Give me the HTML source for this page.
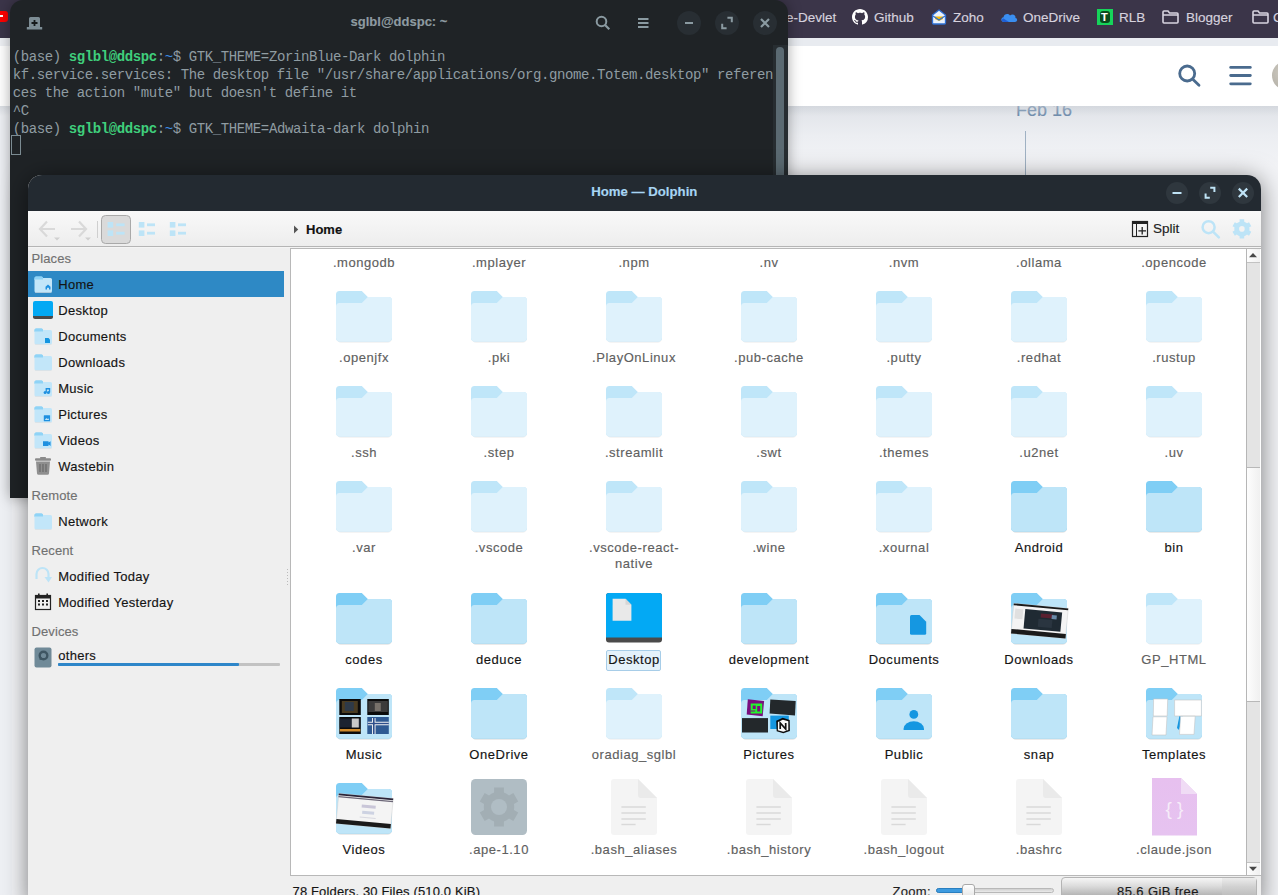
<!DOCTYPE html>
<html><head><meta charset="utf-8"><style>
*{margin:0;padding:0;box-sizing:border-box}
html,body{width:1278px;height:895px;overflow:hidden}
body{position:relative;background:#f0f1f4;font-family:"Liberation Sans",sans-serif}
.a{position:absolute}
.mono{font-family:"Liberation Mono",monospace}
/* terminal */
#term{left:10px;top:0;width:778px;height:498px;background:#1f2326;border-radius:13px 13px 0 0;box-shadow:0 0 14px rgba(0,0,0,.35)}
.tl{position:absolute;left:2.8px;white-space:pre;font-size:14px;letter-spacing:-0.4px;color:#8f9ca2;line-height:18px;height:18px}
.g{color:#3fcf7c;font-weight:bold}
.bl{color:#3d8fe8}
/* dolphin */
#dol{left:28px;top:174px;width:1233px;height:740px;background:#efefef;border-radius:14px 14px 0 0;box-shadow:0 0 16px rgba(0,0,0,.35);overflow:hidden}
#title{left:0;top:0;width:1233px;height:37px;background:#232a31}
#tool{left:0;top:37px;width:1233px;height:36px;background:linear-gradient(#f9f9f9,#ececec);border-bottom:1px solid #b4b4b4}
.side{font-size:13px;color:#1b1b1b}
.hdr{font-size:13px;color:#777}
.lbl{position:absolute;width:130px;text-align:center;font-size:13px;line-height:16px;color:#1f1f1f;letter-spacing:.4px}
.hid{color:#666}

span{-webkit-text-stroke:0.15px currentColor}
.mono span,.tl{-webkit-text-stroke:0}
</style></head><body>
<!-- browser background -->
<div class="a" style="left:0;top:0;width:1278px;height:38px;background:#3b3549"></div>
<div class="a" style="left:0;top:11px;width:8px;height:11px;background:#f00;border-radius:0 3px 3px 0"></div>
<div class="a" style="left:0;top:15px;width:3px;height:2px;background:#fff"></div>
<div class="a" style="left:0;top:38px;width:1278px;height:8px;background:#e8ebf0"></div>
<div class="a" style="left:0;top:106px;width:1278px;height:789px;background:linear-gradient(#e0e3e8,#eceef2 30px,#f2f3f6 60px)"></div>
<div class="a" style="left:0;top:38px;width:12px;height:857px;background:#eef0f4"></div>
<div id="bm" style="position:absolute;left:0;top:0;width:1278px;white-space:nowrap;font-size:13.5px;color:#d6d2de;line-height:16px">
 <span class="a" style="left:786px;top:10px">e-Devlet</span>
 <svg class="a" style="left:852px;top:9px" width="16" height="16" viewBox="0 0 16 16"><path fill="#fff" d="M8 0C3.58 0 0 3.58 0 8c0 3.54 2.29 6.53 5.47 7.59.4.07.55-.17.55-.38 0-.19-.01-.82-.01-1.49-2.01.37-2.53-.49-2.69-.94-.09-.23-.48-.94-.82-1.13-.28-.15-.68-.52-.01-.53.63-.01 1.08.58 1.23.82.72 1.21 1.87.87 2.33.66.07-.52.28-.87.51-1.07-1.78-.2-3.64-.89-3.64-3.95 0-.87.31-1.59.82-2.15-.08-.2-.36-1.02.08-2.12 0 0 .67-.21 2.2.82.64-.18 1.32-.27 2-.27.68 0 1.36.09 2 .27 1.53-1.04 2.2-.82 2.2-.82.44 1.1.16 1.92.08 2.12.51.56.82 1.27.82 2.15 0 3.07-1.87 3.75-3.65 3.95.29.25.54.73.54 1.48 0 1.07-.01 1.93-.01 2.2 0 .21.15.46.55.38A8.013 8.013 0 0016 8c0-4.42-3.58-8-8-8z"/></svg>
 <span class="a" style="left:874px;top:10px">Github</span>
 <svg class="a" style="left:931px;top:9px" width="16" height="16" viewBox="0 0 16 16"><path d="M8 1 L14.5 6 V14 a1 1 0 0 1 -1 1 H2.5 a1 1 0 0 1 -1 -1 V6 Z" fill="#e9f1fb" stroke="#2d6fd2" stroke-width="1.3"/><path d="M4 7.5 H12 V10 L8 12 L4 10Z" fill="#f5b800"/><path d="M2 7 L8 11 L14 7" fill="none" stroke="#2d6fd2" stroke-width="1.2"/></svg>
 <span class="a" style="left:953px;top:10px">Zoho</span>
 <svg class="a" style="left:1000px;top:9px" width="18" height="16" viewBox="0 0 18 16"><path d="M4 13 C0.5 13 0.5 8.5 3.5 8.2 C4 5 8 4 10 6.5 C12.5 4.5 16 6 15.5 9 C18 9.5 17.5 13 15 13 Z" fill="#3a8ef0"/><path d="M4 13 C1.5 13 1 10 3.5 9.5 L9 13Z" fill="#1f5fd6"/></svg>
 <span class="a" style="left:1023px;top:10px">OneDrive</span>
 <div class="a" style="left:1097px;top:9px;width:16px;height:16px;background:#16d45a"></div>
 <div class="a" style="left:1100px;top:11px;width:10px;height:12px;border-radius:3px;background:#0a4a1e"></div>
 <span class="a" style="left:1101px;top:9px;font-weight:bold;color:#fff;font-size:11px">T</span>
 <span class="a" style="left:1119px;top:10px">RLB</span>
 <svg class="a" style="left:1162px;top:10px" width="17" height="14" viewBox="0 0 17 14"><path d="M1 2 a1 1 0 0 1 1 -1 H6 L7.5 3 H15 a1 1 0 0 1 1 1 V12 a1 1 0 0 1 -1 1 H2 a1 1 0 0 1 -1 -1Z M1 5 H16" fill="none" stroke="#d8d4e0" stroke-width="1.6"/></svg>
 <span class="a" style="left:1186px;top:10px">Blogger</span>
 <svg class="a" style="left:1252px;top:10px" width="17" height="14" viewBox="0 0 17 14"><path d="M1 2 a1 1 0 0 1 1 -1 H6 L7.5 3 H15 a1 1 0 0 1 1 1 V12 a1 1 0 0 1 -1 1 H2 a1 1 0 0 1 -1 -1Z M1 5 H16" fill="none" stroke="#d8d4e0" stroke-width="1.6"/></svg>
 <span class="a" style="left:1273px;top:10px">C</span>
</div>
<span class="a" style="left:1016px;top:100px;font-size:18px;line-height:20px;color:#6e8bab">Feb 16</span>
<div class="a" style="left:0;top:46px;width:1278px;height:60px;background:#fff"></div>
<svg class="a" style="left:1170px;top:58px" width="100" height="40" viewBox="1170 58 100 40">
 <circle cx="1187.2" cy="73.5" r="7.5" fill="none" stroke="#4a6b8e" stroke-width="2.8"/>
 <line x1="1192.8" y1="79.2" x2="1199" y2="85.3" stroke="#4a6b8e" stroke-width="2.8" stroke-linecap="round"/>
 <line x1="1230.7" y1="67.4" x2="1250.3" y2="67.4" stroke="#4a6b8e" stroke-width="2.8" stroke-linecap="round"/>
 <line x1="1230.7" y1="75.5" x2="1250.3" y2="75.5" stroke="#4a6b8e" stroke-width="2.8" stroke-linecap="round"/>
 <line x1="1230.7" y1="83.8" x2="1250.3" y2="83.8" stroke="#4a6b8e" stroke-width="2.8" stroke-linecap="round"/>
</svg>
<div class="a" style="left:1272px;top:61px;width:29px;height:29px;border-radius:50%;background:radial-gradient(circle at 40% 40%,#cfcbc2,#a9a69d)"></div>
<div class="a" style="left:0;top:106px;width:1278px;height:10px;background:linear-gradient(rgba(200,205,212,.5),rgba(230,233,238,0))"></div>
<div class="a" style="left:1025px;top:131px;width:1px;height:50px;background:#9fb1c3"></div>


<!-- terminal -->
<div class="a" id="term">
 <svg class="a" style="left:16px;top:17px" width="17" height="13" viewBox="0 0 17 13"><path d="M3 1.5 a1.5 1.5 0 0 1 1.5 -1.5 H12.5 a1.5 1.5 0 0 1 1.5 1.5 V10 H16.2 V12.5 H0.8 V10 H3Z" fill="#7d8d95"/><path d="M8.5 3 V9 M5.5 6 H11.5" stroke="#15191b" stroke-width="1.8"/></svg>
 <span class="a" style="left:0;width:778px;text-align:center;top:14px;font-size:13px;line-height:16px;font-weight:bold;color:#8e9ba1">sglbl@ddspc: ~</span>
 <svg class="a" style="left:584px;top:14px" width="180" height="20" viewBox="594 14 180 20">
  <circle cx="601.5" cy="21.5" r="4.8" fill="none" stroke="#8a9aa1" stroke-width="2"/>
  <line x1="605" y1="25" x2="609.3" y2="29.3" stroke="#8a9aa1" stroke-width="2.2"/>
  <path d="M638 19 H648.5 M638 23 H648.5 M638 27 H648.5" stroke="#8a9aa1" stroke-width="1.8"/>
 </svg>
 <div class="a" style="left:667px;top:11px;width:24px;height:24px;border-radius:50%;background:#282e33"></div>
 <div class="a" style="left:705px;top:11px;width:24px;height:24px;border-radius:50%;background:#282e33"></div>
 <div class="a" style="left:743px;top:11px;width:24px;height:24px;border-radius:50%;background:#282e33"></div>
 <svg class="a" style="left:667px;top:11px" width="100" height="24" viewBox="677 11 100 24">
  <path d="M685 23 H693" stroke="#8a9aa1" stroke-width="2"/>
  <path d="M722.2 23.8 V28.2 H726.6 M727.4 17.8 H731.8 V22.2" stroke="#8a9aa1" stroke-width="2" fill="none"/>
  <path d="M761 19 L769 27 M769 19 L761 27" stroke="#8a9aa1" stroke-width="2.2"/>
 </svg>
 <div class="mono">
  <div class="tl" style="top:48px">(base) <span class="g">sglbl@ddspc</span>:<span class="bl">~</span>$ GTK_THEME=ZorinBlue-Dark dolphin</div>
  <div class="tl" style="top:66px">kf.service.services: The desktop file "/usr/share/applications/org.gnome.Totem.desktop" referen</div>
  <div class="tl" style="top:84px">ces the action "mute" but doesn't define it</div>
  <div class="tl" style="top:102px">^C</div>
  <div class="tl" style="top:120px">(base) <span class="g">sglbl@ddspc</span>:<span class="bl">~</span>$ GTK_THEME=Adwaita-dark dolphin</div>
 </div>
 <div class="a" style="left:1px;top:135px;width:10px;height:20px;border:1px solid #7b8b92"></div>
 <div class="a" style="left:763px;top:45px;width:15px;height:453px;background:#272d31"></div>
 <div class="a" style="left:766px;top:47px;width:8px;height:451px;border-radius:4px 4px 0 0;background:#5b6a72"></div>
</div>


<div class="a" style="left:28px;top:175px;width:1232.5px;height:730px;background:#efefef;border-radius:14px 14px 0 0;box-shadow:0 3px 24px rgba(0,0,0,.5)"></div>
<div class="a" style="left:28px;top:175px;width:1232.5px;height:36px;background:#232a31;border-radius:14px 14px 0 0"></div>
<span class="a" style="left:28px;top:184px;width:1232.5px;text-align:center;font-size:13.2px;line-height:16px;font-weight:bold;color:#a7d5f3">Home — Dolphin</span>
<div class="a" style="left:1165.8px;top:182px;width:22px;height:22px;border-radius:50%;background:#2f373e"></div>
<div class="a" style="left:1199.0px;top:182px;width:22px;height:22px;border-radius:50%;background:#2f373e"></div>
<div class="a" style="left:1232.0px;top:182px;width:22px;height:22px;border-radius:50%;background:#2f373e"></div>
<svg class="a" style="left:1160px;top:180px" width="100" height="26" viewBox="1160 180 100 26">
 <path d="M1172.5 193 H1181.5" stroke="#bfe3f6" stroke-width="2"/>
 <path d="M1205.6 193.5 V197.8 H1209.8 M1214.4 192 V187.8 H1210.2" stroke="#bfe3f6" stroke-width="2" fill="none"/>
 <path d="M1238.8 188.6 L1247.2 197 M1247.2 188.6 L1238.8 197" stroke="#bfe3f6" stroke-width="2.2"/>
</svg>
<div class="a" style="left:28px;top:211px;width:1232.5px;height:36px;background:linear-gradient(#f9f9f9,#ededed);border-bottom:1px solid #b5b5b5"></div>
<div class="a" style="left:28px;top:247px;width:1232.5px;height:1px;background:#f4f4f4"></div>
<svg class="a" style="left:28px;top:211px" width="170" height="36" viewBox="28 211 170 36">
 <path d="M40 229 H55 M47 221.5 L40 229 L47 236.5" stroke="#d9d9d9" stroke-width="2.2" fill="none"/>
 <path d="M54 237.5 H60 L57 240.5Z" fill="#d0d0d0"/>
 <path d="M71 229 H86 M79 221.5 L86 229 L79 236.5" stroke="#d9d9d9" stroke-width="2.2" fill="none"/>
 <path d="M85 237.5 H91 L88 240.5Z" fill="#d0d0d0"/>
 <path d="M97.5 221 V238" stroke="#cfcfcf" stroke-width="1"/>
 <rect x="101.5" y="215.5" width="29" height="28" rx="4" fill="#dadada" stroke="#a9a9a9"/>
 <g fill="#bde4f7">
  <rect x="107.6" y="222" width="5.6" height="5.6"/><rect x="107.6" y="230.4" width="5.6" height="5.6"/>
  <rect x="116.2" y="223.4" width="8.4" height="2.8"/><rect x="116.2" y="231.8" width="8.4" height="2.8"/>
  <rect x="138.8" y="222" width="5.6" height="5.6"/><rect x="138.8" y="230.4" width="5.6" height="5.6"/>
  <rect x="147" y="223.4" width="8" height="2.8"/><rect x="147" y="231.8" width="8" height="2.8"/>
  <rect x="169.8" y="222" width="5.6" height="5.6"/><rect x="169.8" y="230.4" width="5.6" height="5.6"/>
  <rect x="178" y="223.4" width="8" height="2.8"/><rect x="178" y="231.8" width="8" height="2.8"/>
 </g>
</svg>
<svg class="a" style="left:293px;top:225px" width="6" height="9" viewBox="0 0 6 9"><path d="M1 0.5 L5.2 4.5 L1 8.5Z" fill="#555"/></svg>
<span class="a" style="left:306px;top:222px;font-size:13px;line-height:16px;font-weight:bold;color:#111">Home</span>
<svg class="a" style="left:1130px;top:219px" width="130" height="22" viewBox="1130 219 130 22">
 <rect x="1132.5" y="221.5" width="15" height="15" fill="none" stroke="#222" stroke-width="1.2"/>
 <rect x="1132" y="221" width="16" height="3" fill="#222"/>
 <path d="M1136.5 224 V237" stroke="#222" stroke-width="1"/>
 <path d="M1142.2 227 V234.6 M1138.4 230.8 H1146" stroke="#222" stroke-width="1.3"/>
 <circle cx="1208.6" cy="227.2" r="6" fill="none" stroke="#bde4f7" stroke-width="2.5"/>
 <path d="M1213 231.6 L1218.8 237.4" stroke="#bde4f7" stroke-width="2.6" stroke-linecap="round"/>
</svg>
<span class="a" style="left:1153px;top:221px;font-size:13.5px;line-height:16px;color:#222">Split</span>
<svg class="a" style="left:1228px;top:215px" width="28" height="28" viewBox="1228 215 28 28"><path d="M1239.60 221.66 L1239.60 219.37 L1244.20 219.37 L1244.20 221.66 A7.6 7.6 0 0 1 1247.02 223.29 L1249.00 222.15 L1251.30 226.13 L1249.32 227.27 A7.6 7.6 0 0 1 1249.32 230.53 L1251.30 231.67 L1249.00 235.65 L1247.02 234.51 A7.6 7.6 0 0 1 1244.20 236.14 L1244.20 238.43 L1239.60 238.43 L1239.60 236.14 A7.6 7.6 0 0 1 1236.78 234.51 L1234.80 235.65 L1232.50 231.67 L1234.48 230.53 A7.6 7.6 0 0 1 1234.48 227.27 L1232.50 226.13 L1234.80 222.15 L1236.78 223.29 A7.6 7.6 0 0 1 1239.60 221.66Z" fill="#bde4f7"/><circle cx="1241.9" cy="228.9" r="2.8" fill="#f3f3f3"/></svg>
<div class="a" style="left:28px;top:271px;width:256px;height:26px;background:#2e89c5"></div>
<span class="a" style="left:31.5px;top:250.8px;font-size:13px;line-height:16px;color:#717171;letter-spacing:0.1px;white-space:nowrap">Places</span>
<span class="a" style="left:31.5px;top:488.0px;font-size:13px;line-height:16px;color:#717171;letter-spacing:0.1px;white-space:nowrap">Remote</span>
<span class="a" style="left:31.5px;top:543.1px;font-size:13px;line-height:16px;color:#717171;letter-spacing:0.1px;white-space:nowrap">Recent</span>
<span class="a" style="left:31.5px;top:624.1px;font-size:13px;line-height:16px;color:#717171;letter-spacing:0.1px;white-space:nowrap">Devices</span>
<span class="a" style="left:58.2px;top:276.7px;font-size:13px;line-height:16px;color:#141414;letter-spacing:0.3px;white-space:nowrap">Home</span>
<span class="a" style="left:58.2px;top:302.5px;font-size:13px;line-height:16px;color:#141414;letter-spacing:0.3px;white-space:nowrap">Desktop</span>
<span class="a" style="left:58.2px;top:328.5px;font-size:13px;line-height:16px;color:#141414;letter-spacing:0.3px;white-space:nowrap">Documents</span>
<span class="a" style="left:58.2px;top:354.5px;font-size:13px;line-height:16px;color:#141414;letter-spacing:0.3px;white-space:nowrap">Downloads</span>
<span class="a" style="left:58.2px;top:380.5px;font-size:13px;line-height:16px;color:#141414;letter-spacing:0.3px;white-space:nowrap">Music</span>
<span class="a" style="left:58.2px;top:406.5px;font-size:13px;line-height:16px;color:#141414;letter-spacing:0.3px;white-space:nowrap">Pictures</span>
<span class="a" style="left:58.2px;top:432.5px;font-size:13px;line-height:16px;color:#141414;letter-spacing:0.3px;white-space:nowrap">Videos</span>
<span class="a" style="left:58.2px;top:458.5px;font-size:13px;line-height:16px;color:#141414;letter-spacing:0.3px;white-space:nowrap">Wastebin</span>
<svg class="a" style="left:34px;top:276px" width="18" height="17" viewBox="0 0 18 17"><path d="M0.5 2 a1.5 1.5 0 0 1 1.5 -1.5 H7.5 a1.5 1.5 0 0 1 1.5 1.5 V4 H0.5Z" fill="#8fd3f6"/><path d="M0.5 3.5 a1.5 1.5 0 0 1 1.5 -1.5 H16.5 a1.5 1.5 0 0 1 1.5 1.5 V15 a1.5 1.5 0 0 1 -1.5 1.5 H2 a1.5 1.5 0 0 1 -1.5 -1.5Z" fill="#c2e6f9"/><path d="M0.5 2 a1.5 1.5 0 0 1 1.5 -1.5 H7.5 a1.5 1.5 0 0 1 1.5 1.5 V3.6 H0.5Z" fill="#8fd3f6"/><rect x="1" y="16.5" width="16.5" height="0.7" fill="#dcdcdc"/><path d="M11.5 13.5 V10.8 L14 8.6 L16.5 10.8 V13.5 H15 V11.8 H13 V13.5Z" fill="#1e90e0"/></svg>
<div class="a" style="left:33px;top:301px;width:20px;height:18px;border-radius:2px;background:#03a9f4;border-bottom:3px solid #4a4a4a"></div>
<svg class="a" style="left:34px;top:327.5px" width="18" height="17" viewBox="0 0 18 17"><path d="M0.5 2 a1.5 1.5 0 0 1 1.5 -1.5 H7.5 a1.5 1.5 0 0 1 1.5 1.5 V4 H0.5Z" fill="#8fd3f6"/><path d="M0.5 3.5 a1.5 1.5 0 0 1 1.5 -1.5 H16.5 a1.5 1.5 0 0 1 1.5 1.5 V15 a1.5 1.5 0 0 1 -1.5 1.5 H2 a1.5 1.5 0 0 1 -1.5 -1.5Z" fill="#c2e6f9"/><path d="M0.5 2 a1.5 1.5 0 0 1 1.5 -1.5 H7.5 a1.5 1.5 0 0 1 1.5 1.5 V3.6 H0.5Z" fill="#8fd3f6"/><rect x="1" y="16.5" width="16.5" height="0.7" fill="#dcdcdc"/><path d="M11 10 H14.5 L16 11.5 V15 H11Z" fill="#1495e0"/></svg>
<svg class="a" style="left:34px;top:353.5px" width="18" height="17" viewBox="0 0 18 17"><path d="M0.5 2 a1.5 1.5 0 0 1 1.5 -1.5 H7.5 a1.5 1.5 0 0 1 1.5 1.5 V4 H0.5Z" fill="#8fd3f6"/><path d="M0.5 3.5 a1.5 1.5 0 0 1 1.5 -1.5 H16.5 a1.5 1.5 0 0 1 1.5 1.5 V15 a1.5 1.5 0 0 1 -1.5 1.5 H2 a1.5 1.5 0 0 1 -1.5 -1.5Z" fill="#c2e6f9"/><path d="M0.5 2 a1.5 1.5 0 0 1 1.5 -1.5 H7.5 a1.5 1.5 0 0 1 1.5 1.5 V3.6 H0.5Z" fill="#8fd3f6"/><rect x="1" y="16.5" width="16.5" height="0.7" fill="#dcdcdc"/></svg>
<svg class="a" style="left:34px;top:379.5px" width="18" height="17" viewBox="0 0 18 17"><path d="M0.5 2 a1.5 1.5 0 0 1 1.5 -1.5 H7.5 a1.5 1.5 0 0 1 1.5 1.5 V4 H0.5Z" fill="#8fd3f6"/><path d="M0.5 3.5 a1.5 1.5 0 0 1 1.5 -1.5 H16.5 a1.5 1.5 0 0 1 1.5 1.5 V15 a1.5 1.5 0 0 1 -1.5 1.5 H2 a1.5 1.5 0 0 1 -1.5 -1.5Z" fill="#c2e6f9"/><path d="M0.5 2 a1.5 1.5 0 0 1 1.5 -1.5 H7.5 a1.5 1.5 0 0 1 1.5 1.5 V3.6 H0.5Z" fill="#8fd3f6"/><rect x="1" y="16.5" width="16.5" height="0.7" fill="#dcdcdc"/><path d="M11.6 8 H16.2 V9.6 H11.6Z M11.6 8 H12.9 V12.5 H11.6Z M14.9 8 H16.2 V12.5 H14.9Z" fill="#1e90e0"/><circle cx="11.1" cy="12.6" r="1.5" fill="#1e90e0"/><circle cx="14.4" cy="12.6" r="1.5" fill="#1e90e0"/></svg>
<svg class="a" style="left:34px;top:405.5px" width="18" height="17" viewBox="0 0 18 17"><path d="M0.5 2 a1.5 1.5 0 0 1 1.5 -1.5 H7.5 a1.5 1.5 0 0 1 1.5 1.5 V4 H0.5Z" fill="#8fd3f6"/><path d="M0.5 3.5 a1.5 1.5 0 0 1 1.5 -1.5 H16.5 a1.5 1.5 0 0 1 1.5 1.5 V15 a1.5 1.5 0 0 1 -1.5 1.5 H2 a1.5 1.5 0 0 1 -1.5 -1.5Z" fill="#c2e6f9"/><path d="M0.5 2 a1.5 1.5 0 0 1 1.5 -1.5 H7.5 a1.5 1.5 0 0 1 1.5 1.5 V3.6 H0.5Z" fill="#8fd3f6"/><rect x="1" y="16.5" width="16.5" height="0.7" fill="#dcdcdc"/><rect x="9.8" y="9.3" width="6.3" height="5.9" rx="0.5" fill="#1e90e0"/><path d="M10.8 14 L12.3 12 L13.3 13 L14.3 12.2 L15.2 14Z" fill="#bfe5f8"/></svg>
<svg class="a" style="left:34px;top:431.5px" width="18" height="17" viewBox="0 0 18 17"><path d="M0.5 2 a1.5 1.5 0 0 1 1.5 -1.5 H7.5 a1.5 1.5 0 0 1 1.5 1.5 V4 H0.5Z" fill="#8fd3f6"/><path d="M0.5 3.5 a1.5 1.5 0 0 1 1.5 -1.5 H16.5 a1.5 1.5 0 0 1 1.5 1.5 V15 a1.5 1.5 0 0 1 -1.5 1.5 H2 a1.5 1.5 0 0 1 -1.5 -1.5Z" fill="#c2e6f9"/><path d="M0.5 2 a1.5 1.5 0 0 1 1.5 -1.5 H7.5 a1.5 1.5 0 0 1 1.5 1.5 V3.6 H0.5Z" fill="#8fd3f6"/><rect x="1" y="16.5" width="16.5" height="0.7" fill="#dcdcdc"/><path d="M9 9.3 H14.5 V10.6 L16.6 9.3 V13.9 L14.5 12.6 V13.9 H9Z" fill="#1e90e0"/></svg>
<svg class="a" style="left:34px;top:457px" width="18" height="18" viewBox="0 0 18 18">
<rect x="1" y="1.2" width="16" height="2.6" rx="1" fill="#8a8a8a"/><rect x="6" y="0" width="6" height="2" rx="0.8" fill="#8a8a8a"/>
<path d="M2 4.5 H16 L15 16.5 a1.5 1.5 0 0 1 -1.5 1.3 H4.5 a1.5 1.5 0 0 1 -1.5 -1.3Z" fill="#8f8f8f"/>
<path d="M6 7 V15 M9 7 V15 M12 7 V15" stroke="#6e6e6e" stroke-width="1.4"/></svg>
<span class="a" style="left:58.2px;top:513.8px;font-size:13px;line-height:16px;color:#141414;letter-spacing:0.3px;white-space:nowrap">Network</span>
<svg class="a" style="left:34px;top:513px" width="18" height="17" viewBox="0 0 18 17"><path d="M0.5 2 a1.5 1.5 0 0 1 1.5 -1.5 H7.5 a1.5 1.5 0 0 1 1.5 1.5 V4 H0.5Z" fill="#8fd3f6"/><path d="M0.5 3.5 a1.5 1.5 0 0 1 1.5 -1.5 H16.5 a1.5 1.5 0 0 1 1.5 1.5 V15 a1.5 1.5 0 0 1 -1.5 1.5 H2 a1.5 1.5 0 0 1 -1.5 -1.5Z" fill="#c2e6f9"/><path d="M0.5 2 a1.5 1.5 0 0 1 1.5 -1.5 H7.5 a1.5 1.5 0 0 1 1.5 1.5 V3.6 H0.5Z" fill="#8fd3f6"/><rect x="1" y="16.5" width="16.5" height="0.7" fill="#dcdcdc"/></svg>
<span class="a" style="left:58.2px;top:569.0px;font-size:13px;line-height:16px;color:#141414;letter-spacing:0.3px;white-space:nowrap">Modified Today</span>
<span class="a" style="left:58.2px;top:594.8px;font-size:13px;line-height:16px;color:#141414;letter-spacing:0.3px;white-space:nowrap">Modified Yesterday</span>
<svg class="a" style="left:34px;top:566px" width="18" height="18" viewBox="0 0 18 18">
<path d="M2.5 13 V8 a6 6 0 0 1 12 0 V12" fill="none" stroke="#bde4f7" stroke-width="2.2"/>
<path d="M10.5 11 L14.5 16.5 L18 11Z" fill="#bde4f7"/></svg>
<svg class="a" style="left:34px;top:593px" width="18" height="18" viewBox="0 0 18 18">
<rect x="1.5" y="2.5" width="15" height="14" fill="none" stroke="#222" stroke-width="1.2"/>
<rect x="1" y="2" width="16" height="3.5" fill="#222"/>
<rect x="4" y="0.5" width="1.6" height="3" fill="#222"/><rect x="12.4" y="0.5" width="1.6" height="3" fill="#222"/>
<g fill="#222"><rect x="4" y="7" width="2" height="2"/><rect x="8" y="7" width="2" height="2"/><rect x="12" y="7" width="2" height="2"/>
<rect x="4" y="10.5" width="2" height="2"/><rect x="8" y="10.5" width="2" height="2"/><rect x="12" y="10.5" width="2" height="2"/></g></svg>
<svg class="a" style="left:34px;top:647px" width="18" height="21" viewBox="0 0 18 21">
<rect x="0.5" y="0.5" width="17" height="20" rx="2" fill="#708a98"/>
<circle cx="9.5" cy="8.5" r="3.8" fill="none" stroke="#3e5562" stroke-width="2.4"/><path d="M5.6 8.5 V13 L9.5 12.3Z" fill="#3e5562"/></svg>
<span class="a" style="left:58.2px;top:647.6px;font-size:13px;line-height:16px;color:#141414;letter-spacing:0.3px;white-space:nowrap">others</span>
<div class="a" style="left:58px;top:663px;width:222px;height:3px;background:#c2c2c2;border-radius:1px"></div>
<div class="a" style="left:58px;top:663px;width:181px;height:3px;background:#2e86c9;border-radius:1px"></div>
<div class="a" style="left:287px;top:569px;width:1px;height:18px;background:repeating-linear-gradient(#bbb 0 1px,transparent 1px 3px)"></div>
<div class="a" style="left:290px;top:248px;width:970.5px;height:628px;background:#fff;border:1px solid #b8b8b8;border-right:none"></div>
<svg width="0" height="0" style="position:absolute"><defs>
<symbol id="fN" viewBox="0 0 56 56">
 <rect x="0.5" y="46" width="55.5" height="9.8" rx="4.5" fill="#e3e3e3"/>
 <path d="M3.5 4 H25.8 L31.8 10 H52.5 a3.5 3.5 0 0 1 3.5 3.5 V50.5 a4 4 0 0 1 -4 4 H4 a4 4 0 0 1 -4 -4 V7.5 a3.5 3.5 0 0 1 3.5 -3.5Z" fill="#7fcef5"/>
 <path d="M3.5 16 H25.8 L31.8 10 H52.5 a3.5 3.5 0 0 1 3.5 3.5 V50.5 a4 4 0 0 1 -4 4 H4 a4 4 0 0 1 -4 -4 V19.5 a3.5 3.5 0 0 1 3.5 -3.5Z" fill="#bee5f8"/>
</symbol>
<symbol id="fH" viewBox="0 0 56 56">
 <rect x="0.5" y="46" width="55.5" height="9.8" rx="4.5" fill="#f1f1f1"/>
 <path d="M3.5 4 H25.8 L31.8 10 H52.5 a3.5 3.5 0 0 1 3.5 3.5 V50.5 a4 4 0 0 1 -4 4 H4 a4 4 0 0 1 -4 -4 V7.5 a3.5 3.5 0 0 1 3.5 -3.5Z" fill="#bfe6f9"/>
 <path d="M3.5 16 H25.8 L31.8 10 H52.5 a3.5 3.5 0 0 1 3.5 3.5 V50.5 a4 4 0 0 1 -4 4 H4 a4 4 0 0 1 -4 -4 V19.5 a3.5 3.5 0 0 1 3.5 -3.5Z" fill="#dff2fc"/>
</symbol>
<symbol id="txt" viewBox="0 0 46 56">
 <path d="M3 0 H27 L46 19 V53 a3 3 0 0 1 -3 3 H3 a3 3 0 0 1 -3 -3 V3 a3 3 0 0 1 3 -3Z" fill="#f4f4f4"/>
 <path d="M27 0 L46 19 H30 a3 3 0 0 1 -3 -3Z" fill="#eaeaea"/>
 <path d="M10.4 28 H34.8 M10.4 34 H34.8 M10.4 40 H34.8 M10.4 45.5 H24.6" stroke="#d9d9d9" stroke-width="1.6"/>
</symbol>
</defs></svg>
<span class="a" style="left:299px;top:254.5px;width:130px;text-align:center;font-size:13px;line-height:16px;color:#606060;letter-spacing:0.55px;white-space:nowrap">.mongodb</span>
<span class="a" style="left:434px;top:254.5px;width:130px;text-align:center;font-size:13px;line-height:16px;color:#606060;letter-spacing:0.55px;white-space:nowrap">.mplayer</span>
<span class="a" style="left:569px;top:254.5px;width:130px;text-align:center;font-size:13px;line-height:16px;color:#606060;letter-spacing:0.55px;white-space:nowrap">.npm</span>
<span class="a" style="left:704px;top:254.5px;width:130px;text-align:center;font-size:13px;line-height:16px;color:#606060;letter-spacing:0.55px;white-space:nowrap">.nv</span>
<span class="a" style="left:839px;top:254.5px;width:130px;text-align:center;font-size:13px;line-height:16px;color:#606060;letter-spacing:0.55px;white-space:nowrap">.nvm</span>
<span class="a" style="left:974px;top:254.5px;width:130px;text-align:center;font-size:13px;line-height:16px;color:#606060;letter-spacing:0.55px;white-space:nowrap">.ollama</span>
<span class="a" style="left:1109px;top:254.5px;width:130px;text-align:center;font-size:13px;line-height:16px;color:#606060;letter-spacing:0.55px;white-space:nowrap">.opencode</span>
<svg class="a" style="left:336px;top:287px" width="56" height="56"><use href="#fH"/></svg>
<span class="a" style="left:299px;top:349.5px;width:130px;text-align:center;font-size:13px;line-height:16px;color:#606060;letter-spacing:0.55px;white-space:nowrap">.openjfx</span>
<svg class="a" style="left:471px;top:287px" width="56" height="56"><use href="#fH"/></svg>
<span class="a" style="left:434px;top:349.5px;width:130px;text-align:center;font-size:13px;line-height:16px;color:#606060;letter-spacing:0.55px;white-space:nowrap">.pki</span>
<svg class="a" style="left:606px;top:287px" width="56" height="56"><use href="#fH"/></svg>
<span class="a" style="left:569px;top:349.5px;width:130px;text-align:center;font-size:13px;line-height:16px;color:#606060;letter-spacing:0.55px;white-space:nowrap">.PlayOnLinux</span>
<svg class="a" style="left:741px;top:287px" width="56" height="56"><use href="#fH"/></svg>
<span class="a" style="left:704px;top:349.5px;width:130px;text-align:center;font-size:13px;line-height:16px;color:#606060;letter-spacing:0.55px;white-space:nowrap">.pub-cache</span>
<svg class="a" style="left:876px;top:287px" width="56" height="56"><use href="#fH"/></svg>
<span class="a" style="left:839px;top:349.5px;width:130px;text-align:center;font-size:13px;line-height:16px;color:#606060;letter-spacing:0.55px;white-space:nowrap">.putty</span>
<svg class="a" style="left:1011px;top:287px" width="56" height="56"><use href="#fH"/></svg>
<span class="a" style="left:974px;top:349.5px;width:130px;text-align:center;font-size:13px;line-height:16px;color:#606060;letter-spacing:0.55px;white-space:nowrap">.redhat</span>
<svg class="a" style="left:1146px;top:287px" width="56" height="56"><use href="#fH"/></svg>
<span class="a" style="left:1109px;top:349.5px;width:130px;text-align:center;font-size:13px;line-height:16px;color:#606060;letter-spacing:0.55px;white-space:nowrap">.rustup</span>
<svg class="a" style="left:336px;top:382px" width="56" height="56"><use href="#fH"/></svg>
<span class="a" style="left:299px;top:444.5px;width:130px;text-align:center;font-size:13px;line-height:16px;color:#606060;letter-spacing:0.55px;white-space:nowrap">.ssh</span>
<svg class="a" style="left:471px;top:382px" width="56" height="56"><use href="#fH"/></svg>
<span class="a" style="left:434px;top:444.5px;width:130px;text-align:center;font-size:13px;line-height:16px;color:#606060;letter-spacing:0.55px;white-space:nowrap">.step</span>
<svg class="a" style="left:606px;top:382px" width="56" height="56"><use href="#fH"/></svg>
<span class="a" style="left:569px;top:444.5px;width:130px;text-align:center;font-size:13px;line-height:16px;color:#606060;letter-spacing:0.55px;white-space:nowrap">.streamlit</span>
<svg class="a" style="left:741px;top:382px" width="56" height="56"><use href="#fH"/></svg>
<span class="a" style="left:704px;top:444.5px;width:130px;text-align:center;font-size:13px;line-height:16px;color:#606060;letter-spacing:0.55px;white-space:nowrap">.swt</span>
<svg class="a" style="left:876px;top:382px" width="56" height="56"><use href="#fH"/></svg>
<span class="a" style="left:839px;top:444.5px;width:130px;text-align:center;font-size:13px;line-height:16px;color:#606060;letter-spacing:0.55px;white-space:nowrap">.themes</span>
<svg class="a" style="left:1011px;top:382px" width="56" height="56"><use href="#fH"/></svg>
<span class="a" style="left:974px;top:444.5px;width:130px;text-align:center;font-size:13px;line-height:16px;color:#606060;letter-spacing:0.55px;white-space:nowrap">.u2net</span>
<svg class="a" style="left:1146px;top:382px" width="56" height="56"><use href="#fH"/></svg>
<span class="a" style="left:1109px;top:444.5px;width:130px;text-align:center;font-size:13px;line-height:16px;color:#606060;letter-spacing:0.55px;white-space:nowrap">.uv</span>
<svg class="a" style="left:336px;top:477px" width="56" height="56"><use href="#fH"/></svg>
<span class="a" style="left:299px;top:539.5px;width:130px;text-align:center;font-size:13px;line-height:16px;color:#606060;letter-spacing:0.55px;white-space:nowrap">.var</span>
<svg class="a" style="left:471px;top:477px" width="56" height="56"><use href="#fH"/></svg>
<span class="a" style="left:434px;top:539.5px;width:130px;text-align:center;font-size:13px;line-height:16px;color:#606060;letter-spacing:0.55px;white-space:nowrap">.vscode</span>
<svg class="a" style="left:606px;top:477px" width="56" height="56"><use href="#fH"/></svg>
<span class="a" style="left:569px;top:539.5px;width:130px;text-align:center;font-size:13px;line-height:16px;color:#606060;letter-spacing:0.55px;white-space:nowrap">.vscode-react-</span>
<span class="a" style="left:569px;top:555.5px;width:130px;text-align:center;font-size:13px;line-height:16px;color:#606060;letter-spacing:0.55px;white-space:nowrap">native</span>
<svg class="a" style="left:741px;top:477px" width="56" height="56"><use href="#fH"/></svg>
<span class="a" style="left:704px;top:539.5px;width:130px;text-align:center;font-size:13px;line-height:16px;color:#606060;letter-spacing:0.55px;white-space:nowrap">.wine</span>
<svg class="a" style="left:876px;top:477px" width="56" height="56"><use href="#fH"/></svg>
<span class="a" style="left:839px;top:539.5px;width:130px;text-align:center;font-size:13px;line-height:16px;color:#606060;letter-spacing:0.55px;white-space:nowrap">.xournal</span>
<svg class="a" style="left:1011px;top:477px" width="56" height="56"><use href="#fN"/></svg>
<span class="a" style="left:974px;top:539.5px;width:130px;text-align:center;font-size:13px;line-height:16px;color:#141414;letter-spacing:0.55px;white-space:nowrap">Android</span>
<svg class="a" style="left:1146px;top:477px" width="56" height="56"><use href="#fN"/></svg>
<span class="a" style="left:1109px;top:539.5px;width:130px;text-align:center;font-size:13px;line-height:16px;color:#141414;letter-spacing:0.55px;white-space:nowrap">bin</span>
<svg class="a" style="left:336px;top:589px" width="56" height="56"><use href="#fN"/></svg>
<span class="a" style="left:299px;top:651.5px;width:130px;text-align:center;font-size:13px;line-height:16px;color:#141414;letter-spacing:0.55px;white-space:nowrap">codes</span>
<svg class="a" style="left:471px;top:589px" width="56" height="56"><use href="#fN"/></svg>
<span class="a" style="left:434px;top:651.5px;width:130px;text-align:center;font-size:13px;line-height:16px;color:#141414;letter-spacing:0.55px;white-space:nowrap">deduce</span>
<svg class="a" style="left:606px;top:589px" width="56" height="56" viewBox="0 0 56 56">
<rect x="0" y="4" width="56" height="49.6" rx="3" fill="#4b4b4b"/><path d="M3 4 H53 a3 3 0 0 1 3 3 V48.5 H0 V7 a3 3 0 0 1 3 -3Z" fill="#03a9f4"/>
<path d="M6.6 9.8 H19.5 L25.4 15.7 V31.7 H6.6Z" fill="#e9e9e9"/><path d="M19.5 9.8 L25.4 15.7 H19.5Z" fill="#d6d6d6"/></svg>
<div class="a" style="left:606px;top:649.5px;width:55px;height:21px;background:#e4f1fa;border:1px solid #a7cde8;border-radius:2px"></div>
<span class="a" style="left:569px;top:651.5px;width:130px;text-align:center;font-size:13px;line-height:16px;color:#141414;letter-spacing:0.55px;white-space:nowrap">Desktop</span>
<svg class="a" style="left:741px;top:589px" width="56" height="56"><use href="#fN"/></svg>
<span class="a" style="left:704px;top:651.5px;width:130px;text-align:center;font-size:13px;line-height:16px;color:#141414;letter-spacing:0.55px;white-space:nowrap">development</span>
<svg class="a" style="left:876px;top:589px" width="56" height="56"><use href="#fN"/></svg>
<svg class="a" style="left:876px;top:589px" width="56" height="56" viewBox="0 0 56 56">
<path d="M34 27.5 a1.5 1.5 0 0 1 1.5 -1.5 H43.5 L50.2 32.7 V44.3 a1.5 1.5 0 0 1 -1.5 1.5 H35.5 a1.5 1.5 0 0 1 -1.5 -1.5Z" fill="#1597e1"/></svg>
<span class="a" style="left:839px;top:651.5px;width:130px;text-align:center;font-size:13px;line-height:16px;color:#141414;letter-spacing:0.55px;white-space:nowrap">Documents</span>
<svg class="a" style="left:1011px;top:589px" width="56" height="56"><use href="#fN"/></svg>
<svg class="a" style="left:1007px;top:589px;overflow:visible" width="64" height="60" viewBox="-4 0 64 60">
<g transform="translate(2.8,14.4) rotate(5.3)">
<rect x="0" y="0" width="54.7" height="30.2" fill="#f4f4f4" stroke="#c8c8c8" stroke-width="0.4"/>
<rect x="0" y="0" width="54.7" height="1.8" fill="#1a1a1a"/>
<rect x="12" y="4.5" width="37" height="19.5" fill="#1f2a33"/><rect x="28" y="7.5" width="12" height="4" fill="#5a2030"/><rect x="39" y="8" width="5" height="4" fill="#6a8aa8"/><rect x="26" y="13" width="14" height="8" fill="#2a3540"/><rect x="2" y="5" width="8" height="10" fill="#e0e0e0"/>
<rect x="0" y="25.6" width="54.7" height="4.6" fill="#1a1a1a"/>
</g></svg>
<span class="a" style="left:974px;top:651.5px;width:130px;text-align:center;font-size:13px;line-height:16px;color:#141414;letter-spacing:0.55px;white-space:nowrap">Downloads</span>
<svg class="a" style="left:1146px;top:589px" width="56" height="56"><use href="#fH"/></svg>
<span class="a" style="left:1109px;top:651.5px;width:130px;text-align:center;font-size:13px;line-height:16px;color:#606060;letter-spacing:0.55px;white-space:nowrap">GP_HTML</span>
<svg class="a" style="left:336px;top:684px" width="56" height="56"><use href="#fN"/></svg>
<svg class="a" style="left:336px;top:684px" width="56" height="56" viewBox="0 0 56 56"><g transform="translate(0.8,0)">
<circle cx="34.5" cy="39" r="3.5" fill="#22a0ea"/>
<rect x="2.5" y="15" width="21.5" height="16" fill="#0b0b0b"/><rect x="5" y="17" width="16" height="12" fill="#4a3c22"/><rect x="8" y="18" width="9" height="9" fill="#2e3a48"/>
<rect x="30.5" y="15" width="21.5" height="16" fill="#0b0b0b"/><rect x="31.5" y="17" width="19.5" height="11" fill="#3b3b3b"/><rect x="38" y="19" width="6" height="8" fill="#77716a"/>
<rect x="2.5" y="33" width="21.5" height="17" fill="#0b0b0b"/><rect x="3" y="34.5" width="20.5" height="9" fill="#1c2330"/><rect x="15" y="34.5" width="7" height="9" fill="#c8c8c8"/><rect x="3" y="45" width="20.5" height="2.5" fill="#d08a2a"/>
<rect x="30.5" y="33" width="21.5" height="17" fill="#2f5a93"/><path d="M31 39.5 H52 M37 34 V50" stroke="#f3f3f3" stroke-width="3.5"/><path d="M31 39.5 H52 M37 34 V50" stroke="#2e4f8c" stroke-width="1.6"/></g></svg>
<span class="a" style="left:299px;top:746.5px;width:130px;text-align:center;font-size:13px;line-height:16px;color:#141414;letter-spacing:0.55px;white-space:nowrap">Music</span>
<svg class="a" style="left:471px;top:684px" width="56" height="56"><use href="#fN"/></svg>
<span class="a" style="left:434px;top:746.5px;width:130px;text-align:center;font-size:13px;line-height:16px;color:#141414;letter-spacing:0.55px;white-space:nowrap">OneDrive</span>
<svg class="a" style="left:606px;top:684px" width="56" height="56"><use href="#fH"/></svg>
<span class="a" style="left:569px;top:746.5px;width:130px;text-align:center;font-size:13px;line-height:16px;color:#606060;letter-spacing:0.55px;white-space:nowrap">oradiag_sglbl</span>
<svg class="a" style="left:741px;top:684px" width="56" height="56"><use href="#fN"/></svg>
<svg class="a" style="left:741px;top:684px" width="56" height="56" viewBox="0 0 56 56"><g transform="translate(-1.3,0)">
<rect x="30.6" y="31.6" width="18.5" height="13.4" fill="#1597e1"/>
<path d="M8.1 15.2 L24.4 17.1 L23 32.3 L7 30.5Z" fill="#7a0e7e"/>
<path d="M11 19.5 H22.5 V29.5 H11Z" fill="#22f52c"/><path d="M13 21.5 H16 V25 H13Z M17.5 22 H20.5 V27.5 H17.5Z M11 26.5 H15.5 V27.5 H11Z" fill="#7a0e7e"/>
<path d="M30.6 15.6 L56 17 L55.3 31.6 L29.9 29.4Z" fill="#23282b"/>
<rect x="2.3" y="34.1" width="26" height="14.4" fill="#23282b"/>
<path d="M36.5 36.8 L43 33.8 L50 36 L50.2 47 L43.6 49.3 L37 47.2Z" fill="#0a0a0a"/><path d="M38.2 38 L43.2 35.8 L48.6 37.3 L48.6 46 L43.6 47.8 L38.2 46.3Z" fill="#fafafa"/>
<path d="M40.5 45 V39 L46 45 V39" fill="none" stroke="#111" stroke-width="1.7"/></g></svg>
<span class="a" style="left:704px;top:746.5px;width:130px;text-align:center;font-size:13px;line-height:16px;color:#141414;letter-spacing:0.55px;white-space:nowrap">Pictures</span>
<svg class="a" style="left:876px;top:684px" width="56" height="56"><use href="#fN"/></svg>
<svg class="a" style="left:876px;top:684px" width="56" height="56" viewBox="0 0 56 56">
<circle cx="37.8" cy="30.4" r="4.4" fill="#1597e1"/><path d="M27.6 46 V44.8 a10.2 7.5 0 0 1 20.4 0 V46Z" fill="#1597e1"/></svg>
<span class="a" style="left:839px;top:746.5px;width:130px;text-align:center;font-size:13px;line-height:16px;color:#141414;letter-spacing:0.55px;white-space:nowrap">Public</span>
<svg class="a" style="left:1011px;top:684px" width="56" height="56"><use href="#fN"/></svg>
<span class="a" style="left:974px;top:746.5px;width:130px;text-align:center;font-size:13px;line-height:16px;color:#141414;letter-spacing:0.55px;white-space:nowrap">snap</span>
<svg class="a" style="left:1146px;top:684px" width="56" height="56"><use href="#fN"/></svg>
<svg class="a" style="left:1146px;top:684px" width="56" height="56" viewBox="0 0 56 56">
<path d="M34 29 L38 29 L33 46 L31 44Z" fill="#1597e1"/>
<path d="M7.6 15 H21.7 L21.2 32 H7.3Z" fill="#fff" stroke="#c4c4c4" stroke-width="0.6"/>
<path d="M7 32.8 H21 L20 51 H6Z" fill="#fff" stroke="#c4c4c4" stroke-width="0.6"/>
<path d="M28.6 16 H55.4 V32 H28.6Z" fill="#fff" stroke="#c4c4c4" stroke-width="0.6"/>
<path d="M34.5 32.2 H49.2 L48 50.4 H33.5Z" fill="#fff" stroke="#c4c4c4" stroke-width="0.6"/></svg>
<span class="a" style="left:1109px;top:746.5px;width:130px;text-align:center;font-size:13px;line-height:16px;color:#141414;letter-spacing:0.55px;white-space:nowrap">Templates</span>
<svg class="a" style="left:336px;top:779px" width="56" height="56"><use href="#fN"/></svg>
<svg class="a" style="left:332px;top:779px;overflow:visible" width="64" height="60" viewBox="-4 0 64 60">
<g transform="translate(2.8,14.4) rotate(5.3)">
<rect x="0" y="0" width="54.7" height="30.2" fill="#f4f4f4" stroke="#c8c8c8" stroke-width="0.4"/>
<rect x="0" y="0" width="54.7" height="1.8" fill="#2a2438"/>
<rect x="0" y="2.6" width="54.7" height="1.2" fill="#6b6677"/><rect x="24" y="9" width="14" height="3" fill="#c9c6d8"/><rect x="25" y="15" width="12" height="3" fill="#cdd2e2"/><rect x="23" y="21" width="16" height="1" fill="#d8d8e0"/>
<rect x="0" y="25.6" width="54.7" height="4.6" fill="#1a1a1a"/>
</g></svg>
<span class="a" style="left:299px;top:841.5px;width:130px;text-align:center;font-size:13px;line-height:16px;color:#141414;letter-spacing:0.55px;white-space:nowrap">Videos</span>
<svg class="a" style="left:471px;top:779px" width="56" height="56" viewBox="0 0 56 56">
<rect x="0" y="0" width="56" height="56" rx="4.5" fill="#b0bdc4"/><path d="M23.10 13.61 L23.10 8.61 L32.90 8.61 L32.90 13.61 A15.2 15.2 0 0 1 38.01 16.56 L42.34 14.06 L47.24 22.55 L42.91 25.05 A15.2 15.2 0 0 1 42.91 30.95 L47.24 33.45 L42.34 41.94 L38.01 39.44 A15.2 15.2 0 0 1 32.90 42.39 L32.90 47.39 L23.10 47.39 L23.10 42.39 A15.2 15.2 0 0 1 17.99 39.44 L13.66 41.94 L8.76 33.45 L13.09 30.95 A15.2 15.2 0 0 1 13.09 25.05 L8.76 22.55 L13.66 14.06 L17.99 16.56 A15.2 15.2 0 0 1 23.10 13.61Z" fill="#a2aeb4"/><circle cx="28" cy="28" r="8" fill="#b0bdc4"/></svg>
<span class="a" style="left:434px;top:841.5px;width:130px;text-align:center;font-size:13px;line-height:16px;color:#606060;letter-spacing:0.55px;white-space:nowrap">.ape-1.10</span>
<svg class="a" style="left:611px;top:779px" width="46" height="56"><use href="#txt"/></svg>
<span class="a" style="left:569px;top:841.5px;width:130px;text-align:center;font-size:13px;line-height:16px;color:#606060;letter-spacing:0.55px;white-space:nowrap">.bash_aliases</span>
<svg class="a" style="left:746px;top:779px" width="46" height="56"><use href="#txt"/></svg>
<span class="a" style="left:704px;top:841.5px;width:130px;text-align:center;font-size:13px;line-height:16px;color:#606060;letter-spacing:0.55px;white-space:nowrap">.bash_history</span>
<svg class="a" style="left:881px;top:779px" width="46" height="56"><use href="#txt"/></svg>
<span class="a" style="left:839px;top:841.5px;width:130px;text-align:center;font-size:13px;line-height:16px;color:#606060;letter-spacing:0.55px;white-space:nowrap">.bash_logout</span>
<svg class="a" style="left:1016px;top:779px" width="46" height="56"><use href="#txt"/></svg>
<span class="a" style="left:974px;top:841.5px;width:130px;text-align:center;font-size:13px;line-height:16px;color:#606060;letter-spacing:0.55px;white-space:nowrap">.bashrc</span>
<svg class="a" style="left:1151.5px;top:778px" width="45" height="58" viewBox="0 0 45 58">
<defs><linearGradient id="pk" x1="0" y1="0" x2="0" y2="1"><stop offset="0" stop-color="#e7c0ef"/><stop offset="1" stop-color="#e6c3f0"/></linearGradient></defs>
<path d="M0 0 H29 L45 16 V57.5 H0Z" fill="url(#pk)"/><path d="M29 0 L45 16 H29Z" fill="#f0dcf5"/>
<text x="22.5" y="37" text-anchor="middle" font-family="Liberation Sans" font-size="19" fill="#f6ecf9">{ }</text></svg>
<span class="a" style="left:1109px;top:841.5px;width:130px;text-align:center;font-size:13px;line-height:16px;color:#606060;letter-spacing:0.55px;white-space:nowrap">.claude.json</span>
<div class="a" style="left:1246px;top:249px;width:14px;height:626px;background:#e4e4e4;border-left:1px solid #b6b6b6"></div>
<div class="a" style="left:1247px;top:249px;width:13px;height:13.5px;background:linear-gradient(90deg,#fdfdfd,#f0f0f0);border-bottom:1px solid #c2c2c2"></div>
<svg class="a" style="left:1248px;top:252px" width="10" height="6" viewBox="0 0 10 6"><path d="M1 5.2 L5 1 L9 5.2Z" fill="#474747"/></svg>
<div class="a" style="left:1247px;top:467px;width:13px;height:235px;background:linear-gradient(90deg,#fdfdfd,#f0f0f0);border-top:1px solid #b8b8b8;border-bottom:1px solid #b8b8b8"></div>
<div class="a" style="left:1247px;top:861.5px;width:13px;height:13.5px;background:linear-gradient(90deg,#fdfdfd,#f0f0f0);border-top:1px solid #c2c2c2"></div>
<svg class="a" style="left:1248px;top:865.5px" width="10" height="6" viewBox="0 0 10 6"><path d="M1 0.8 L5 5 L9 0.8Z" fill="#474747"/></svg>
<span class="a" style="left:292.5px;top:883.5px;font-size:13px;line-height:16px;color:#141414;letter-spacing:.15px;white-space:nowrap">78 Folders, 30 Files (510.0 KiB)</span>
<span class="a" style="left:892.5px;top:883.5px;font-size:13px;line-height:16px;color:#1f1f1f;letter-spacing:.3px;white-space:nowrap">Zoom:</span>
<div class="a" style="left:936px;top:888px;width:118px;height:5px;border-radius:3px;background:linear-gradient(#d0d0d0,#eaeaea);border:1px solid #b8b8b8"></div>
<div class="a" style="left:936px;top:888px;width:30px;height:5px;border-radius:3px 0 0 3px;background:#3d9be0;border:1px solid #2a7fc0"></div>
<div class="a" style="left:962px;top:884px;width:13px;height:14px;border-radius:3px;background:linear-gradient(#ffffff,#e6e6e6);border:1px solid #a9a9a9"></div>
<div class="a" style="left:1061px;top:876.5px;width:196px;height:22px;border-radius:4px 4px 0 0;background:linear-gradient(#f6f6f6,#dcdcdc 40%,#a9a9a9);border:1px solid #b4b4b4"></div>
<div class="a" style="left:1222px;top:877.5px;width:34px;height:21px;background:linear-gradient(#ececec,#d2d2d2 40%,#b5b5b5)"></div>
<span class="a" style="left:1117px;top:884px;font-size:13px;line-height:16px;color:#1a1a1a;letter-spacing:.4px;white-space:nowrap">85.6 GiB free</span>
</body></html>
